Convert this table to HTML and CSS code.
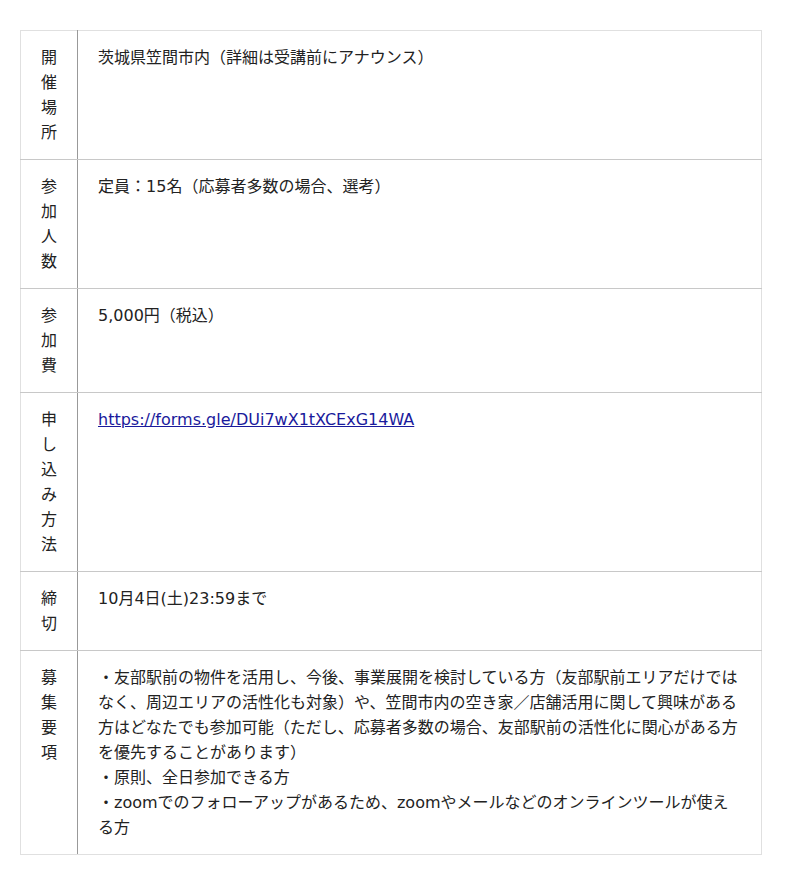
FILE: index.html
```html
<!DOCTYPE html>
<html lang="ja">
<head>
  <meta charset="UTF-8">
  <meta name="viewport" content="width=device-width, initial-scale=1.0">
  <title>募集要項</title>
  <link rel="stylesheet" href="styles.css">
</head>
<body>
  <table class="info-table">
    <tr>
      <th>開催場所</th>
      <td>茨城県笠間市内（詳細は受講前にアナウンス）</td>
    </tr>
    <tr>
      <th>参加人数</th>
      <td>定員：15名（応募者多数の場合、選考）</td>
    </tr>
    <tr>
      <th>参加費</th>
      <td>5,000円（税込）</td>
    </tr>
    <tr>
      <th>申し込み方法</th>
      <td><a href="https://forms.gle/DUi7wX1tXCExG14WA">https://forms.gle/DUi7wX1tXCExG14WA</a></td>
    </tr>
    <tr>
      <th>締切</th>
      <td>10月4日(土)23:59まで</td>
    </tr>
    <tr>
      <th>募集要項</th>
      <td>・友部駅前の物件を活用し、今後、事業展開を検討している方（友部駅前エリアだけではなく、周辺エリアの活性化も対象）や、笠間市内の空き家／店舗活用に関して興味がある方はどなたでも参加可能（ただし、応募者多数の場合、友部駅前の活性化に関心がある方を優先することがあります）<br>・原則、全日参加できる方<br>・zoomでのフォローアップがあるため、zoomやメールなどのオンラインツールが使える方</td>
    </tr>
  </table>
</body>
</html>
```

FILE: styles.css
```css
body {
  font-family: 'DejaVu Sans', 'Noto Sans CJK JP', sans-serif;
  margin: 0;
  padding: 30px 20px;
  background: #fff;
  color: #222;
}

.info-table {
  width: 742px;
  border-collapse: collapse;
  font-size: 16px;
  line-height: 25px;
}

.info-table th,
.info-table td {
  border-top: 1px solid #c8c8c8;
  border-bottom: 1px solid #c8c8c8;
  vertical-align: top;
  text-align: left;
}

.info-table tr:first-child th,
.info-table tr:first-child td {
  border-top-color: #e0e0e0;
}

.info-table tr:last-child th,
.info-table tr:last-child td {
  border-bottom-color: #e0e0e0;
}

.info-table th {
  width: 16px;
  padding: 14px 20px;
  font-weight: normal;
  border-left: 1px solid #e0e0e0;
  border-right: 1px solid #999;
}

.info-table td {
  padding: 14px 20px;
  border-right: 1px solid #e0e0e0;
}

.info-table a {
  color: #1a1a9c;
}
```
